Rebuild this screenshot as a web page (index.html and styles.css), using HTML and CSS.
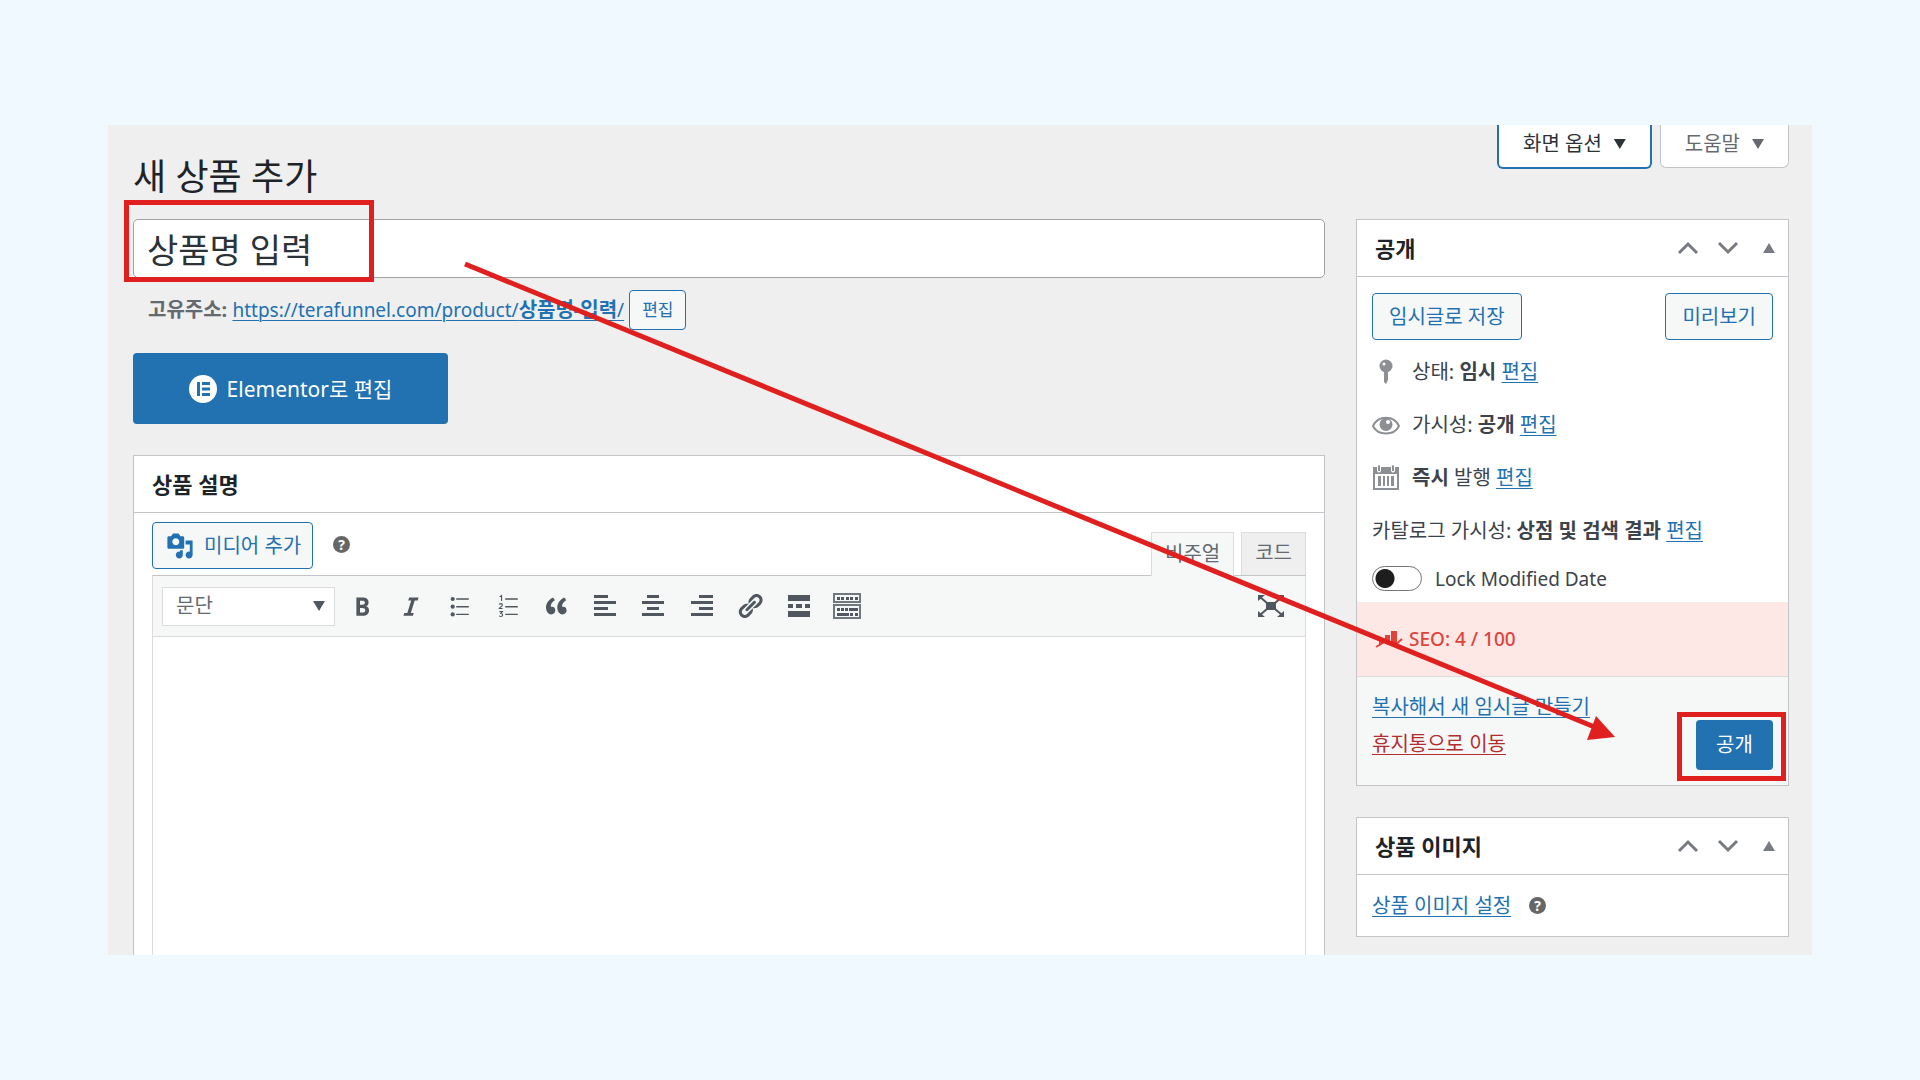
FILE: index.html
```html
<!DOCTYPE html>
<html lang="ko">
<head>
<meta charset="utf-8">
<title>새 상품 추가</title>
<link rel="stylesheet" href="styles.css">
</head>
<body>
<div class="frame">
  <header class="topbar">
    <h1>새 상품 추가</h1>
    <div class="screen-meta">
      <button class="meta-btn is-focused" type="button">화면 옵션 <span class="caret"></span></button>
      <button class="meta-btn" type="button">도움말 <span class="caret"></span></button>
    </div>
  </header>

  <div class="columns">
    <main class="main">
      <div class="title-wrap">
        <input class="title-input" type="text" value="상품명 입력" aria-label="상품명">
        <span class="callout callout-title"></span>
      </div>
      <div class="permalink">
        <span><strong>고유주소:</strong> <a href="#">https://terafunnel.com/product/<b>상품명-입력</b>/</a></span>
        <button class="btn btn-small" type="button">편집</button>
      </div>
      <button class="elementor" type="button">
        <svg width="28" height="28" viewBox="0 0 28 28" aria-hidden="true"><circle cx="14" cy="14" r="14" fill="#fff"/><path d="M8 7h3v14H8zM13 7h8v3h-8zM13 12.500h8v3h-8zM13 18h8v3h-8z" fill="#2271b1"/></svg>
        Elementor로 편집
      </button>

      <section class="box editor-box">
        <div class="box-head"><h2>상품 설명</h2></div>
        <div class="editor-body">
          <div class="editor-tools">
            <button class="btn btn-media" type="button">
              <svg width="28" height="28" viewBox="0 0 20 20" fill="currentColor" aria-hidden="true"><path d="M13 11V4c0-.55-.45-1-1-1h-1.670L9 1H5L3.670 3H2c-.55 0-1 .45-1 1v7c0 .55.45 1 1 1h10c.55 0 1-.45 1-1zM7 4.500c1.380 0 2.500 1.120 2.500 2.500S8.380 9.500 7 9.500 4.500 8.380 4.500 7 5.620 4.500 7 4.500zM14 6h5v10.500c0 1.380-1.120 2.500-2.500 2.500S14 17.880 14 16.500s1.120-2.500 2.500-2.500c.17 0 .34.02.5.05V9h-3V6zm-4 8.050V13h2v3.500c0 1.380-1.120 2.500-2.500 2.500S7 17.880 7 16.500 8.120 14 9.500 14c.17 0 .34.02.5.05z"/></svg>
              미디어 추가
            </button>
            <span class="help">?</span>
            <div class="tabs">
              <button class="tab is-active" type="button">비주얼</button>
              <button class="tab" type="button">코드</button>
            </div>
          </div>
          <div class="editor">
            <div class="toolbar">
              <div class="select-wrap">
                <select aria-label="단락 형식"><option>문단</option></select>
                <span class="caret"></span>
              </div>
              <div class="tool-group">
                <button class="tool" type="button" aria-label="굵게"><svg viewBox="0 0 20 20"><path d="M6 4v13h4.540c1.370 0 2.460-.33 3.260-1 .8-.66 1.200-1.580 1.200-2.770 0-.84-.17-1.510-.51-2.010s-.9-.85-1.670-1.030v-.09c.57-.1 1.020-.4 1.360-.9s.51-1.130.51-1.910c0-1.140-.39-1.980-1.170-2.500C12.750 4.260 11.500 4 9.780 4H6zm2.570 5.150V6.260h1.360c.73 0 1.270.11 1.610.32.34.22.51.58.51 1.070 0 .54-.16.92-.47 1.150s-.82.35-1.510.35h-1.500zm0 2.190h1.600c1.440 0 2.160.53 2.160 1.610 0 .6-.17 1.050-.51 1.340s-.86.43-1.570.43H8.570v-3.380z"/></svg></button>
                <button class="tool" type="button" aria-label="기울임"><svg viewBox="0 0 20 20"><path d="M14.780 6h-2.130l-2.800 9h2.120l-.62 2H4.600l.62-2h2.140l2.800-9H8.030l.62-2h6.750z"/></svg></button>
                <button class="tool" type="button" aria-label="글머리 목록"><svg viewBox="0 0 20 20"><circle cx="5.500" cy="5" r="1.500"/><circle cx="5.500" cy="10.500" r="1.500"/><circle cx="5.500" cy="16" r="1.500"/><path d="M8 4.500h9v1H8zM8 10h9v1H8zM8 15.500h9v1H8z"/></svg></button>
                <button class="tool" type="button" aria-label="번호 목록"><svg viewBox="0 0 20 20"><path d="M8 4.500h9v1H8zM8 10h9v1H8zM8 15.500h9v1H8z"/><path d="M4 3.500l1.400-1v4M3.800 9c.4-1 2.200-.9 2.200.2 0 .9-1.400 1.300-2.200 2.600H6.200M3.900 14h2.100l-1.100 1.300c1.800 0 1.600 2.200-.1 2.200-.5 0-.8-.2-1-.5" fill="none" stroke="currentColor" stroke-width=".8"/></svg></button>
                <button class="tool" type="button" aria-label="인용"><svg viewBox="0 0 20 20"><path d="M9.490 13.220c0-.74-.2-1.380-.61-1.900-.62-.78-1.830-.88-2.530-.72-.29-1.650 1.110-3.750 2.920-4.650L7.880 4c-2.730 1.300-5.420 4.280-4.960 8.050C3.210 14.430 4.590 16 6.540 16c.85 0 1.560-.25 2.120-.75s.83-1.180.83-2.030zm8.050 0c0-.74-.2-1.380-.61-1.900-.63-.78-1.830-.88-2.530-.72-.29-1.650 1.110-3.750 2.920-4.650L15.930 4c-2.730 1.300-5.410 4.280-4.950 8.050.29 2.380 1.660 3.950 3.610 3.950.85 0 1.560-.25 2.120-.75s.83-1.180.83-2.030z"/></svg></button>
                <button class="tool" type="button" aria-label="왼쪽 정렬"><svg viewBox="0 0 28 28"><path d="M3 3h14v3H3zM3 9h22v3H3zM3 15h14v3H3zM3 21h22v3H3z"/></svg></button>
                <button class="tool" type="button" aria-label="가운데 정렬"><svg viewBox="0 0 28 28"><path d="M8 3h12v3H8zM3 9h22v3H3zM8 15h12v3H8zM3 21h22v3H3z"/></svg></button>
                <button class="tool" type="button" aria-label="오른쪽 정렬"><svg viewBox="0 0 28 28"><path d="M11 3h14v3H11zM3 9h22v3H3zM11 15h14v3H11zM3 21h22v3H3z"/></svg></button>
                <button class="tool" type="button" aria-label="링크"><svg viewBox="0 0 20 20"><path d="M17.740 2.760c1.680 1.690 1.680 4.410 0 6.100l-1.530 1.520c-1.120 1.120-2.700 1.470-4.140 1.090l2.620-2.610.76-.77.76-.76c.84-.84.84-2.200 0-3.040-.84-.85-2.200-.85-3.040 0l-.77.76-3.380 3.380c-.37-1.440-.02-3.020 1.100-4.140l1.520-1.530c1.690-1.680 4.420-1.680 6.100 0zM8.590 13.430l5.340-5.340c.42-.42.42-1.100 0-1.520-.44-.43-1.130-.39-1.530 0l-5.330 5.340c-.42.42-.42 1.100 0 1.520.44.43 1.130.39 1.520 0zm-.76 2.290l4.140-4.150c.38 1.440.03 3.020-1.090 4.140l-1.520 1.530c-1.690 1.680-4.410 1.680-6.100 0-1.680-1.680-1.680-4.420 0-6.100l1.530-1.520c1.120-1.120 2.700-1.470 4.140-1.100l-4.140 4.150c-.85.84-.85 2.200 0 3.050.84.84 2.200.84 3.040 0z"/></svg></button>
                <button class="tool" type="button" aria-label="더 보기 태그"><svg viewBox="0 0 28 28"><path d="M3 3h22v6H3zM3 12h5v4H3zM11 12h6v4h-6zM20 12h5v4h-5zM3 19h22v6H3z"/></svg></button>
                <button class="tool" type="button" aria-label="툴바 토글"><svg viewBox="0 0 28 28"><path d="M1 2h26v8H1zM1 13h26v13H1z" fill="none" stroke="currentColor" stroke-width="2" stroke-opacity=".8"/><path d="M4 5h3v3H4zM8 5h3v3H8zM13 5h3v3h-3zM17 5h3v3h-3zM22 5h3v3h-3zM4 16h3v3H4zM8 16h3v3H8zM12 16h3v3h-3zM16 16h9v3h-9zM4 21h12v3H4zM17 21h3v3h-3zM22 21h3v3h-3z"/></svg></button>
              </div>
              <button class="tool tool-full" type="button" aria-label="전체 화면"><svg viewBox="0 0 28 28"><path d="M9 10h10v8H9zM1 3h7L1 9zM27 3h-7l7 6zM1 25h7l-7-6zM27 25h-7l7-6z"/><path d="M3 5l7 6M25 5l-7 6M3 23l7-6M25 23l-7-6" fill="none" stroke="currentColor" stroke-width="2"/></svg></button>
            </div>
            <div class="canvas"></div>
          </div>
        </div>
      </section>
    </main>

    <aside class="side">
      <section class="box">
        <div class="box-head">
          <h2>공개</h2>
          <div class="handles">
            <svg viewBox="0 0 22 14"><path d="M2 12l9-9 9 9"/></svg>
            <svg viewBox="0 0 22 14"><path d="M2 2l9 9 9-9"/></svg>
            <span class="fold"></span>
          </div>
        </div>
        <div class="publish">
          <div class="publish-actions">
            <button class="btn" type="button">임시글로 저장</button>
            <button class="btn" type="button">미리보기</button>
          </div>
          <div class="row">
            <svg class="icon" viewBox="0 0 28 28"><circle cx="14" cy="8" r="6.500"/><path d="M12 13h4v9l-2 4-2-2z"/><circle cx="12" cy="6" r="1.500" fill="#fff"/></svg>
            <span>상태: <b>임시</b> <a href="#">편집</a></span>
          </div>
          <div class="row">
            <svg class="icon" viewBox="0 0 28 28"><path d="M1 15C6 4 22 4 27 15 22 25 6 25 1 15z" fill="none" stroke="currentColor" stroke-width="2"/><circle cx="14" cy="13.500" r="6.500"/><circle cx="16" cy="11" r="2" fill="#fff"/></svg>
            <span>가시성: <b>공개</b> <a href="#">편집</a></span>
          </div>
          <div class="row">
            <svg class="icon" viewBox="0 0 28 28"><path d="M1 3h4v4q2 3 4 0V3h10v4q2 3 4 0V3h4v23H1zM3 10v14h22V10z" fill-rule="evenodd"/><path d="M6 2q1-2 2 0v5H6zM20 2q1-2 2 0v5h-2zM6 12h3v10H6zM11 12h2v10h-2zM15 12h2v10h-2zM19 12h3v10h-3z"/></svg>
            <span><b>즉시</b> 발행 <a href="#">편집</a></span>
          </div>
          <div class="row">
            <span>카탈로그 가시성: <b>상점 및 검색 결과</b> <a href="#">편집</a></span>
          </div>
          <label class="lock"><input type="checkbox" class="toggle"><span>Lock Modified Date</span></label>
        </div>
        <div class="seo">
          <svg width="28" height="20" viewBox="0 0 28 20" aria-hidden="true"><path d="M4 10h5v4l-5 3zM10 6h5v9l-5-1zM16 2h6v14l-6-2z"/><path d="M1 18l10-6 9 4 7-6" fill="none" stroke="currentColor" stroke-width="2"/></svg>
          <span>SEO: 4 / 100</span>
        </div>
        <div class="publish-foot">
          <div class="foot-links">
            <a href="#">복사해서 새 임시글 만들기</a>
            <a class="danger" href="#">휴지통으로 이동</a>
          </div>
          <div class="publish-wrap">
            <button class="btn-primary" type="button">공개</button>
            <span class="callout callout-publish"></span>
          </div>
        </div>
      </section>

      <section class="box">
        <div class="box-head">
          <h2>상품 이미지</h2>
          <div class="handles">
            <svg viewBox="0 0 22 14"><path d="M2 12l9-9 9 9"/></svg>
            <svg viewBox="0 0 22 14"><path d="M2 2l9 9 9-9"/></svg>
            <span class="fold"></span>
          </div>
        </div>
        <div class="image-body"><a href="#">상품 이미지 설정</a><span class="help">?</span></div>
      </section>
    </aside>
  </div>
  <svg class="arrow" width="1160" height="490" viewBox="0 0 1160 490" aria-hidden="true"><path d="M2 4L1134 468" stroke="#e01f1f" stroke-width="5"/><path d="M1152 477l-19-21-9 24z" fill="#e01f1f"/></svg>
</div>
</body>
</html>
```
FILE: styles.css
```css
* { box-sizing: border-box; }

body {
  margin: 0;
  height: 100vh;
  padding: 125px 108px;
  background: #f0f9ff;
  color: #3c434a;
  font: 20px/28px "Noto Sans", "Noto Sans CJK KR", sans-serif;
}

button, input, select { font: inherit; color: inherit; margin: 0; }
button { cursor: pointer; white-space: nowrap; }
a { color: #2271b1; text-underline-offset: 3px; text-decoration-thickness: 1px; }
h1, h2 { margin: 0; color: #1d2327; }
b, strong { font-weight: 700; }
svg { fill: currentColor; flex: none; }

.frame {
  position: relative;
  height: 100%;
  padding: 0 23px 0 25px;
  overflow: hidden;
  background: #efefef;
}

.topbar { display: flex; justify-content: space-between; height: 94px; }
h1 { padding-top: 32px; font-size: 36px; line-height: 40px; font-weight: 400; }

.screen-meta { display: flex; align-items: flex-start; gap: 8px; }
.meta-btn {
  display: flex;
  align-items: center;
  gap: 12px;
  height: 43px;
  padding: 0 24px 4px;
  border: 1px solid #c3c4c7;
  border-top: 0;
  border-radius: 0 0 6px 6px;
  background: #fff;
  color: #646970;
}
.meta-btn.is-focused { height: 44px; border: 2px solid #2271b1; border-top: 0; color: #2c3338; }

.caret {
  width: 12px;
  height: 10px;
  background: currentColor;
  clip-path: polygon(0 0, 100% 0, 50% 100%);
}

.columns { display: grid; grid-template-columns: minmax(0, 1fr) 433px; gap: 31px; }

.title-wrap { position: relative; }
.title-input {
  display: block;
  width: 100%;
  height: 59px;
  padding: 0 13px;
  border: 1px solid #a0a2a5;
  border-radius: 5px;
  background: #fff;
  color: #2c3338;
  font-size: 34px;
}
.callout { position: absolute; border: 5px solid #e01f1f; pointer-events: none; }
.callout-title { left: -9px; top: -19px; width: 250px; height: 82px; }
.callout-publish { inset: -8px -13px -11px -19px; }

.permalink {
  display: flex;
  align-items: center;
  gap: 5px;
  margin-top: 12px;
  padding-left: 15px;
  color: #646970;
}
.permalink a { font-size: 19px; }
.permalink b { font-size: 20px; }

.btn {
  height: 47px;
  padding: 0 16px;
  border: 1px solid #2271b1;
  border-radius: 4px;
  background: #f6f7f7;
  color: #2271b1;
}
.btn-small { height: 40px; padding: 0 12px; font-size: 17px; }

.elementor {
  display: flex;
  align-items: center;
  justify-content: center;
  gap: 10px;
  width: 315px;
  height: 71px;
  margin: 23px 0 31px;
  border: 0;
  border-radius: 4px;
  background: #2271b1;
  color: #fff;
  font-size: 21px;
}

.box { border: 1px solid #c3c4c7; background: #fff; }
.box-head {
  display: flex;
  align-items: center;
  justify-content: space-between;
  height: 57px;
  padding: 0 13px 0 18px;
  border-bottom: 1px solid #c3c4c7;
}
h2 { font-size: 22px; line-height: 28px; font-weight: 700; }
.handles { display: flex; align-items: center; gap: 18px; color: #787c82; }
.handles svg { width: 22px; height: 14px; fill: none; stroke: currentColor; stroke-width: 3; }
.fold {
  width: 12px;
  height: 10px;
  margin-left: 6px;
  background: currentColor;
  clip-path: polygon(50% 0, 100% 100%, 0 100%);
}

.editor-body { padding: 9px 18px 0; }
.editor-tools { display: flex; align-items: flex-start; height: 53px; }
.btn-media { display: flex; align-items: center; gap: 10px; padding: 0 11px 0 13px; }
.help {
  width: 17px;
  height: 17px;
  border-radius: 50%;
  background: #666;
  color: #fff;
  font-size: 14px;
  line-height: 17px;
  font-weight: 700;
  text-align: center;
}
.editor-tools .help { margin: 14px 0 0 20px; }
.tabs { display: flex; gap: 7px; margin: 10px 0 0 auto; }
.tab {
  height: 43px;
  padding: 0 13px 2px;
  border: 1px solid #dcdcde;
  border-bottom: 0;
  background: #efefef;
  color: #646970;
}
.tab.is-active { position: relative; height: 44px; background: #f6f7f7; }

.editor { border: 1px solid #dcdcde; border-top-color: #c3c4c7; }
.toolbar {
  display: flex;
  align-items: center;
  height: 61px;
  padding: 0 20px 0 9px;
  border-bottom: 1px solid #dcdcde;
  background: #f6f7f7;
  color: #50575e;
}
.select-wrap { display: grid; align-items: center; width: 173px; margin-right: 13px; }
.select-wrap > * { grid-area: 1 / 1; }
.select-wrap select {
  height: 39px;
  padding: 0 13px;
  border: 1px solid #dcdcde;
  background: #fff;
  color: #646970;
  appearance: none;
}
.select-wrap .caret { justify-self: end; margin-right: 10px; pointer-events: none; }
.tool-group { display: flex; flex: 0 1 513px; justify-content: space-between; }
.tool { width: 28px; height: 28px; padding: 0; border: 0; background: none; }
.tool svg { display: block; width: 28px; height: 28px; }
.tool-full { margin-left: auto; }
.canvas { height: 400px; }

.publish { padding: 16px 15px 0; }
.publish-actions { display: flex; justify-content: space-between; margin-bottom: 5px; }
.row { display: flex; align-items: center; gap: 12px; height: 53px; }
.icon { width: 28px; height: 28px; color: #8c8f94; }
.lock { display: flex; align-items: center; gap: 13px; height: 45px; padding-bottom: 2px; font-size: 19px; }
.toggle {
  appearance: none;
  width: 50px;
  height: 25px;
  border: 1px solid #757575;
  border-radius: 13px;
  background: radial-gradient(circle at 12px 50%, #1e1e1e 9px, #fff 10px);
}
.seo {
  display: flex;
  align-items: center;
  gap: 6px;
  height: 74px;
  padding-left: 18px;
  background: #fde8e6;
  color: #e0433a;
  font-size: 19px;
  font-weight: 500;
}
.publish-foot {
  display: flex;
  align-items: center;
  justify-content: space-between;
  height: 109px;
  padding: 0 15px;
  border-top: 1px solid #dcdcde;
  background: #f6f7f7;
}
.foot-links { display: flex; flex-direction: column; gap: 9px; padding-bottom: 12px; }
.danger { color: #b32d2e; }
.publish-wrap { position: relative; margin-top: 28px; }
.btn-primary {
  display: block;
  width: 77px;
  height: 50px;
  border: 0;
  border-radius: 4px;
  background: #2271b1;
  color: #fff;
}
.side .box + .box { margin-top: 31px; }
.image-body { display: flex; align-items: center; gap: 18px; height: 61px; padding: 0 15px; }

.arrow { position: absolute; left: 355px; top: 135px; pointer-events: none; }
```
